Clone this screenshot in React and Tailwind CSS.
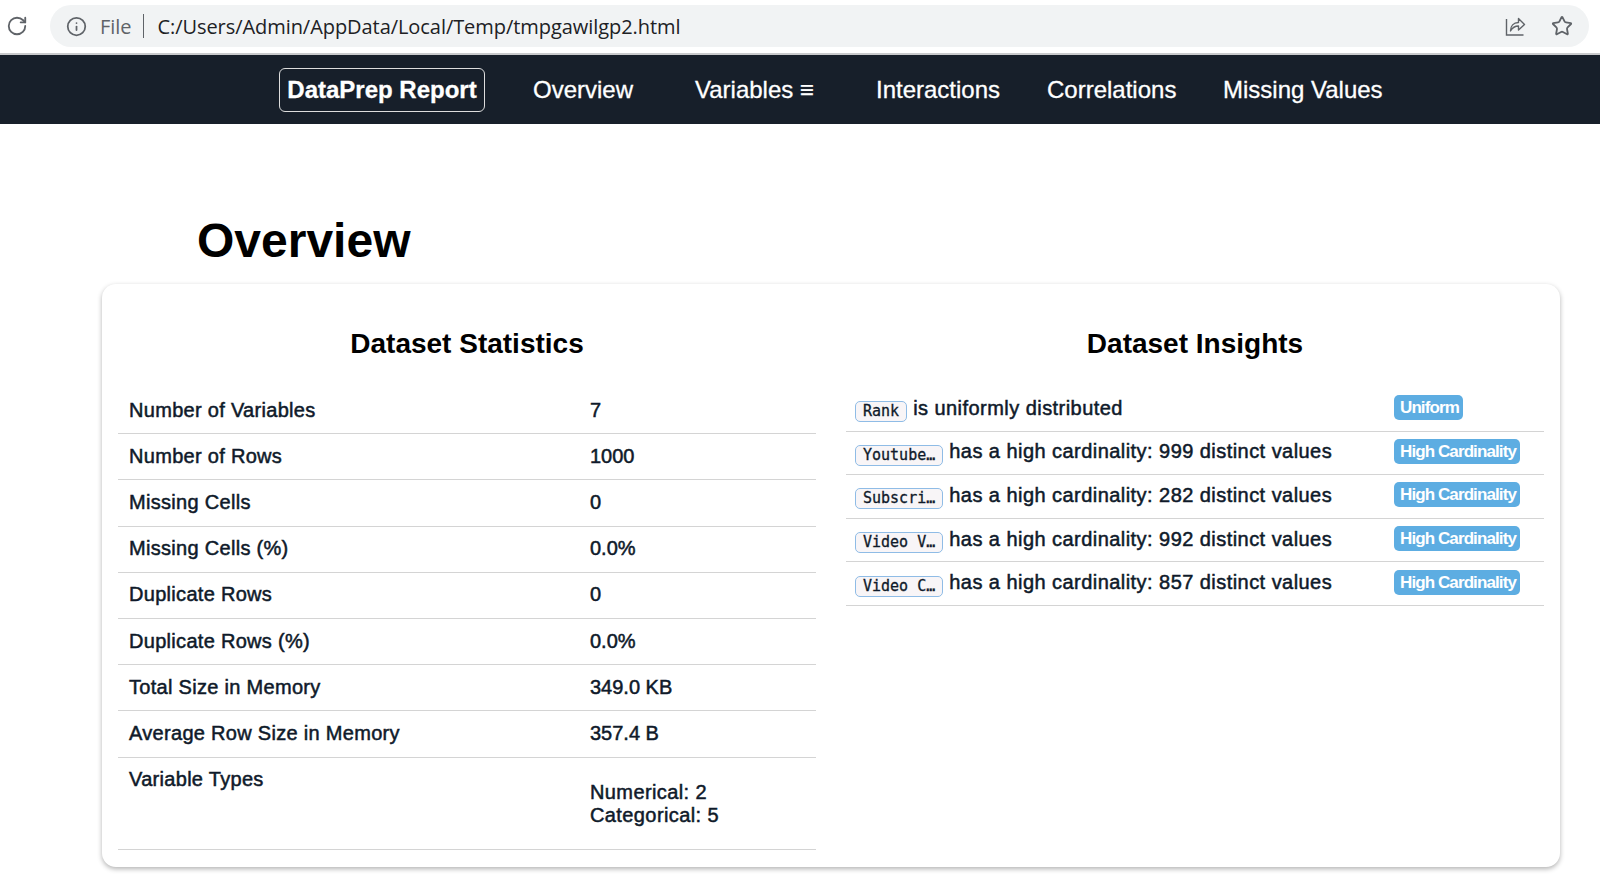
import React from "react";
import { Info, RotateCw, Star } from "lucide-react";

const stats = [
  ["Number of Variables", "7"],
  ["Number of Rows", "1000"],
  ["Missing Cells", "0"],
  ["Missing Cells (%)", "0.0%"],
  ["Duplicate Rows", "0"],
  ["Duplicate Rows (%)", "0.0%"],
  ["Total Size in Memory", "349.0 KB"],
  ["Average Row Size in Memory", "357.4 B"],
];

const insights = [
  ["Rank", "is uniformly distributed", "Uniform"],
  ["Youtube…", "has a high cardinality: 999 distinct values", "High Cardinality"],
  ["Subscri…", "has a high cardinality: 282 distinct values", "High Cardinality"],
  ["Video V…", "has a high cardinality: 992 distinct values", "High Cardinality"],
  ["Video C…", "has a high cardinality: 857 distinct values", "High Cardinality"],
];

const ShareIcon = () => (
  <svg width="24" height="24" viewBox="0 0 24 24" fill="none" stroke="#5f6368" strokeWidth="1.4">
    <path d="M3.5 5v16h17" />
    <path d="M7.5 17c0-5 3-8.500 8-8.500V4.500l6 6-6 5.500v-4c-3.500 0-6 1.500-8 5z" strokeLinejoin="round" />
  </svg>
);

const App = () => {
  return (
    <div className="h-[894px] overflow-hidden bg-white font-['Liberation_Sans',Arial,sans-serif] text-[#0f1a2a]">
      {/* browser bar */}
      <div className="flex h-[55px] items-start border-b-2 border-[#c9cacc] bg-white pt-[5px]">
        <div className="flex h-[42px] w-[50px] items-center pl-[6px]">
          <RotateCw className="h-[22px] w-[22px] text-[#5f6368]" strokeWidth={2} />
        </div>
        <div className="flex h-[42px] w-[1539px] items-center rounded-full bg-[#f1f3f4] pl-[16px] pr-[16px] font-['Open_Sans',sans-serif] text-[20px] tracking-[-0.06px] text-[#202124]">
          <Info className="h-[21px] w-[21px] text-[#5f6368]" strokeWidth={2} />
          <span className="ml-[13px] mt-[1px] text-[#5f6368]">File</span>
          <span className="ml-[12px] mr-[13px] h-[24px] w-px bg-[#5f6368]" />
          <span className="mt-[1px]">C:/Users/Admin/AppData/Local/Temp/tmpgawilgp2.html</span>
          <div className="ml-auto flex items-center gap-[24px]">
            <ShareIcon />
            <Star className="h-[22px] w-[22px] text-[#5f6368]" strokeWidth={2} />
          </div>
        </div>
      </div>

      {/* nav */}
      <nav className="flex h-[69px] items-center bg-[#171f2a] pl-[279px] text-[24px] text-white [-webkit-text-stroke:0.3px]">
        <div className="flex h-[44px] w-[206px] items-center justify-center rounded-[6px] border border-[#dddddd] text-[24px] font-bold">
          DataPrep Report
        </div>
        <a className="ml-[48px] w-[111px]">Overview</a>
        <a className="ml-[51px] w-[122px] whitespace-nowrap">Variables ≡</a>
        <a className="ml-[59px] w-[122px]">Interactions</a>
        <a className="ml-[49px] w-[128px]">Correlations</a>
        <a className="ml-[48px] whitespace-nowrap">Missing Values</a>
      </nav>

      <h1 className="ml-[197px] mt-[89px] text-[48px] leading-[56px] font-bold text-black">Overview</h1>

      {/* card */}
      <div className="ml-[102px] mt-[15px] flex h-[583px] w-[1458px] rounded-[14px] bg-white px-[16px] pt-[42px] shadow-[0_2px_5px_rgba(0,0,0,0.3)]">
        <div className="w-[698px]">
          <h2 className="text-center text-[28px] leading-[36px] font-bold text-black">Dataset Statistics</h2>
          <div className="mt-[26px] text-[20px] [-webkit-text-stroke:0.5px]">
            {stats.map(([label, value]) => (
              <div key={label} className="flex h-[46.2px] items-center border-b border-[#d4d4d4] pb-[2px] pl-[11px]">
                <div className="w-[461px] tracking-[0.3px]">{label}</div>
                <div>{value}</div>
              </div>
            ))}
            <div className="flex h-[92px] border-b border-[#d4d4d4] pl-[11px]">
              <div className="w-[461px] pt-[9px] leading-[24px] tracking-[0.3px]">Variable Types</div>
              <div className="pt-[23px] leading-[23px] tracking-[0.4px]">
                <div>Numerical: 2</div>
                <div>Categorical: 5</div>
              </div>
            </div>
          </div>
        </div>
        <div className="ml-[30px] w-[698px]">
          <h2 className="text-center text-[28px] leading-[36px] font-bold text-black">Dataset Insights</h2>
          <div className="mt-[26px] text-[20px] [-webkit-text-stroke:0.5px]">
            {insights.map(([name, text, tag]) => (
              <div key={name} className="flex h-[43.6px] items-center border-b border-[#d4d4d4] pb-[3px] pl-[9px]">
                <div className="flex w-[539px] items-center">
                  <code className="mt-[8px] rounded-[5px] border border-[#8fbce6] bg-[#f8f5f7] px-[7px] font-['DejaVu_Sans_Mono',monospace] text-[15px] leading-[19px] [-webkit-text-stroke:0.3px]">
                    {name}
                  </code>
                  <span className="ml-[6px] tracking-[0.45px]">{text}</span>
                </div>
                <span className="rounded-[5px] bg-[#5dade2] pl-[6px] pr-[4px] text-[17px] leading-[25px] font-bold tracking-[-0.9px] text-white [-webkit-text-stroke:0px]">
                  {tag}
                </span>
              </div>
            ))}
          </div>
        </div>
      </div>
    </div>
  );
};

export default App;
